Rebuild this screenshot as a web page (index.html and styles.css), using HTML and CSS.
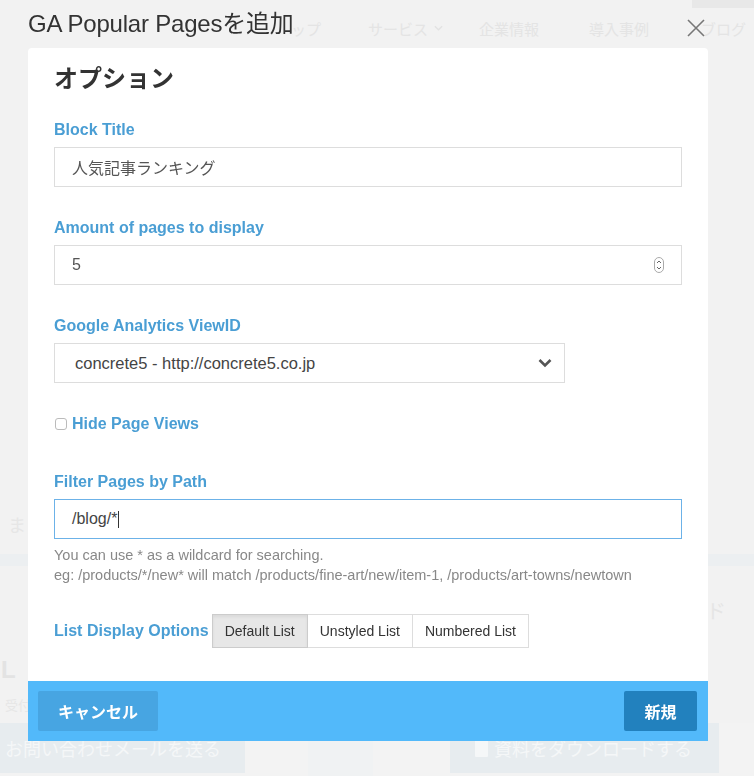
FILE: index.html
```html
<!DOCTYPE html>
<html lang="ja">
<head>
    <meta charset="UTF-8">
    <meta name="viewport" content="width=device-width, initial-scale=1.0">
    <title>GA Popular Pagesを追加</title>
    <link rel="stylesheet" href="styles.css">
</head>
<body>
    <!-- faded site behind the dialog -->
    <div class="page">
        <div class="topbar"><span class="badge"></span></div>
        <nav class="nav">
            <span class="nav-item nav-top">ップ</span>
            <span class="nav-item nav-service">サービス
                <svg class="nav-caret" viewBox="0 0 10 6"><path d="M1 1l4 4 4-4" fill="none" stroke="#e2e2e2" stroke-width="1.4"/></svg>
            </span>
            <span class="nav-item nav-company">企業情報</span>
            <span class="nav-item nav-case">導入事例</span>
            <span class="nav-item">ブログ</span>
        </nav>
        <div class="hero"><span class="ghost-lead">ま</span></div>
        <div class="band"></div>
        <div class="contact">
            <div class="contact-left">
                <span class="tel">L</span>
                <span class="hours">受付</span>
            </div>
            <span class="ghost-dl">ド</span>
        </div>
        <div class="cta">
            <span class="cta-btn cta-mail">お問い合わせメールを送る</span>
            <span class="cta-gap"><span class="cta-stripe"></span></span>
            <span class="cta-btn cta-doc"><span class="doc-icon"></span>資料をダウンロードする</span>
        </div>
    </div>

    <div class="modal">
        <div class="modal-head">
            <h1 class="modal-title">GA Popular Pagesを追加</h1>
            <svg class="close" viewBox="0 0 18 18"><path d="M1 1L17 17M17 1L1 17" stroke="#777" stroke-width="1.6" fill="none"/></svg>
        </div>
        <div class="modal-body">
            <h2 class="section-title">オプション</h2>

            <div class="form-group">
                <label class="control-label">Block Title</label>
                <div class="form-control">人気記事ランキング</div>
            </div>

            <div class="form-group">
                <label class="control-label">Amount of pages to display</label>
                <div class="form-control number">
                    5
                    <svg class="spinner" viewBox="0 0 10 16">
                        <rect x="0.5" y="0.5" width="9" height="15" rx="4.5" fill="#fff" stroke="#aaa"/>
                        <path d="M3 6l2-2 2 2M3 10l2 2 2-2" fill="none" stroke="#666" stroke-width="1"/>
                    </svg>
                </div>
            </div>

            <div class="form-group">
                <label class="control-label">Google Analytics ViewID</label>
                <div class="form-control select">
                    concrete5 - http://concrete5.co.jp
                    <svg class="chevron" viewBox="0 0 14 10"><path d="M1.5 2l5.5 5.5 5.5-5.5" fill="none" stroke="#555" stroke-width="2.6"/></svg>
                </div>
            </div>

            <div class="check-row">
                <span class="checkbox"></span>
                <label class="control-label inline">Hide Page Views</label>
            </div>

            <div class="form-group tight">
                <label class="control-label">Filter Pages by Path</label>
                <div class="form-control focused">/blog/*<span class="caret"></span></div>
                <p class="help">You can use * as a wildcard for searching.<br>eg: /products/*/new* will match /products/fine-art/new/item-1, /products/art-towns/newtown</p>
            </div>

            <div class="list-row">
                <label class="control-label inline">List Display Options</label>
                <div class="btn-group">
                    <span class="opt active">Default List</span>
                    <span class="opt">Unstyled List</span>
                    <span class="opt">Numbered List</span>
                </div>
            </div>
        </div>
        <div class="modal-foot">
            <button type="button" class="btn btn-cancel">キャンセル</button>
            <button type="button" class="btn btn-primary">新規</button>
        </div>
    </div>
</body>
</html>
```

FILE: styles.css
```css
*
{
    box-sizing: border-box;
}
body
{
    margin: 0;
    background-color: #f2f2f2;
    font-family: "Liberation Sans", "Noto Sans CJK JP", sans-serif;
    color: #333;
}

/* background page */
.page
{
    height: 776px;
    overflow: hidden;
}
.topbar
{
    height: 8px;
    display: flex;
    justify-content: flex-end;
}
.badge
{
    width: 62px;
    height: 8px;
    background-color: #e8e8e8;
}
.nav
{
    height: 40px;
    display: flex;
    align-items: center;
    padding-left: 291px;
    font-size: 15px;
    color: #e4e4e4;
    white-space: nowrap;
}
.nav-item
{
    display: flex;
    align-items: center;
}
.nav-top { margin-right: 47px; }
.nav-service { margin-right: 36px; }
.nav-company { margin-right: 50px; }
.nav-case { margin-right: 52px; }
.nav-caret
{
    width: 9px;
    height: 6px;
    margin-left: 6px;
}
.hero
{
    height: 506px;
    display: flex;
    align-items: flex-end;
    padding: 0 0 17px 8px;
}
.ghost-lead
{
    font-size: 18px;
    line-height: 22px;
    color: #e6e6e6;
}
.band
{
    height: 12px;
    background-color: #eceff1;
}
.contact
{
    height: 157px;
    display: flex;
    justify-content: space-between;
}
.contact-left
{
    display: flex;
    flex-direction: column;
    justify-content: flex-end;
    padding-bottom: 8px;
}
.tel
{
    font-size: 24px;
    line-height: 24px;
    font-weight: bold;
    color: #e3e3e3;
    margin: 0 0 15px 1px;
}
.hours
{
    font-size: 13px;
    line-height: 18px;
    color: #e6e6e6;
    padding-left: 5px;
}
.ghost-dl
{
    font-size: 20px;
    line-height: 28px;
    color: #e5e5e5;
    margin: 32px 28px 0 0;
}
.cta
{
    height: 53px;
    display: flex;
    background-color: #f3f3f3;
}
.cta-btn
{
    height: 50px;
    display: flex;
    align-items: center;
    background-color: #e7ecef;
    color: #f5f7f8;
    font-size: 18px;
    white-space: nowrap;
}
.cta-mail
{
    width: 245px;
    padding-left: 5px;
}
.cta-gap
{
    width: 205px;
    padding-left: 63px;
}
.cta-stripe
{
    display: block;
    width: 65px;
    height: 53px;
    background-color: #f0f2f3;
}
.cta-doc
{
    width: 269px;
    padding-left: 25px;
}
.doc-icon
{
    width: 13px;
    height: 17px;
    background-color: #f5f7f8;
    margin-right: 6px;
    border-radius: 1px;
}

/* dialog */
.modal
{
    position: fixed;
    top: 0;
    left: 28px;
    width: 680px;
}
.modal-head
{
    height: 48px;
    display: flex;
    justify-content: space-between;
}
.modal-title
{
    margin: 0;
    font-size: 24px;
    font-weight: normal;
    line-height: 48px;
    color: #333;
    letter-spacing: -0.2px;
}
.close
{
    width: 18px;
    height: 18px;
    margin: 19px 3px 0 0;
}
.modal-body
{
    background-color: #fff;
    border-radius: 4px 4px 0 0;
    padding: 16px 26px 33px;
}
.section-title
{
    margin: 0 0 26px;
    font-size: 24px;
    line-height: 30px;
    font-weight: bold;
    color: #333;
}
.form-group
{
    margin-bottom: 31px;
}
.form-group.tight
{
    margin-bottom: 29px;
}
.control-label
{
    display: block;
    font-size: 16px;
    line-height: 20px;
    font-weight: bold;
    color: #4a9ed4;
    margin-bottom: 7px;
}
.control-label.inline
{
    margin-bottom: 0;
}
.form-control
{
    position: relative;
    height: 40px;
    display: flex;
    align-items: center;
    border: 1px solid #ddd;
    padding: 0 17px;
    font-size: 16px;
    color: #555;
    background-color: #fff;
}
.spinner
{
    position: absolute;
    right: 17px;
    top: 11px;
    width: 10px;
    height: 16px;
}
.select
{
    width: 511px;
    padding-left: 20px;
    font-size: 16.5px;
    color: #444;
}
.chevron
{
    position: absolute;
    right: 12px;
    top: 14px;
    width: 14px;
    height: 10px;
}
.check-row
{
    display: flex;
    align-items: center;
    height: 20px;
    margin-bottom: 38px;
}
.checkbox
{
    width: 12px;
    height: 12px;
    border: 1px solid #bbb;
    border-radius: 3px;
    margin: 0 5px 0 1px;
    background-color: #fff;
}
.focused
{
    border-color: #6cb2e8;
    color: #444;
}
.caret
{
    width: 1px;
    height: 17px;
    background-color: #333;
    margin-left: 1px;
}
.help
{
    margin: 6px 0 0;
    font-size: 14.5px;
    line-height: 20px;
    color: #888;
}
.list-row
{
    display: flex;
    align-items: center;
}
.list-row .control-label
{
    margin-right: 3px;
}
.btn-group
{
    display: flex;
}
.opt
{
    height: 34px;
    display: flex;
    align-items: center;
    padding: 0 12px;
    border: 1px solid #ddd;
    border-left: none;
    font-size: 14px;
    color: #333;
    background-color: #fff;
}
.opt:first-child
{
    border-left: 1px solid #ccc;
}
.opt.active
{
    background-color: #e7e7e7;
    border-color: #ccc;
    box-shadow: inset 0 2px 3px rgba(0,0,0,0.06);
}
.modal-foot
{
    height: 60px;
    display: flex;
    justify-content: space-between;
    align-items: center;
    padding: 0 11px 0 10px;
    background-color: #52b9fa;
}
.btn
{
    height: 40px;
    border: none;
    border-radius: 2px;
    color: #fff;
    font-family: "Liberation Sans", "Noto Sans CJK JP", sans-serif;
    font-size: 16px;
    font-weight: bold;
}
.btn-cancel
{
    width: 120px;
    background-color: #47a5e2;
}
.btn-primary
{
    width: 73px;
    background-color: #2281be;
}
```
